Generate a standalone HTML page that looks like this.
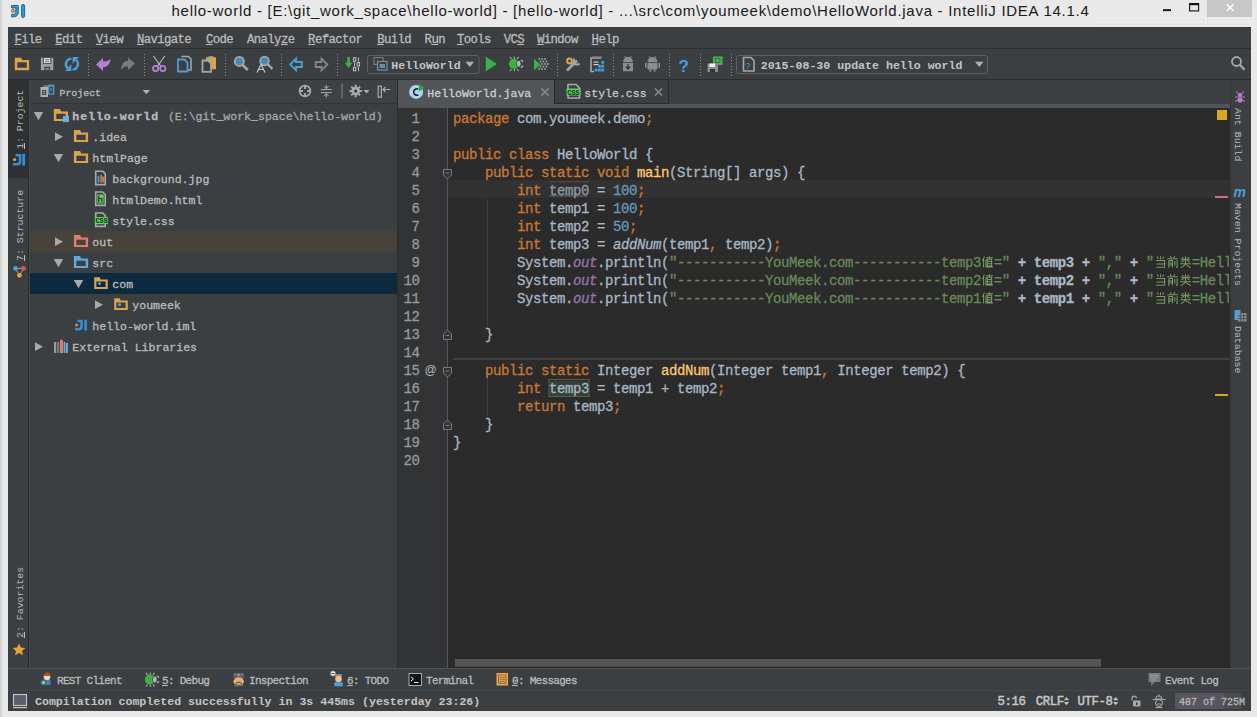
<!DOCTYPE html>
<html><head><meta charset="utf-8">
<style>
*{margin:0;padding:0;box-sizing:border-box}
html,body{width:1257px;height:717px;overflow:hidden;background:#e8e8e8;font-family:"Liberation Mono",monospace}
.a{position:absolute}
.t{position:absolute;white-space:pre;line-height:1;-webkit-text-stroke:0.3px currentColor}
#title{left:0;top:0;width:1257px;height:27px;background:#e9e9e9}
#frameL{left:0;top:0;width:2px;height:717px;background:#d6d6d6}
#ide{left:8px;top:27px;width:1243px;height:683px;background:#3c3f41}
#menu{left:8px;top:27px;width:1243px;height:22px;background:#3c3f41;border-bottom:1px solid #2d2f31}
#tool{left:8px;top:49px;width:1243px;height:31px;background:#3c3f41;border-bottom:1px solid #2b2b2b}
#lstrip{left:8px;top:80px;width:22px;height:588px;background:#3c3f41;border-right:1px solid #46494b}
#lstripb{left:28px;top:80px;width:1px;height:588px;background:#2b2b2b}
#lsel{left:8px;top:80px;width:20px;height:98px;background:#2e3032}
#proj{left:30px;top:80px;width:367px;height:588px;background:#3c3f41}
#projhdr{left:30px;top:80px;width:367px;height:24px;background:#3e4143;border-bottom:1px solid #323436}
#divider{left:397px;top:80px;width:1px;height:588px;background:#2b2b2b}
#tabs{left:398px;top:80px;width:832px;height:28px;background:#3c3f41}
#tab1{left:398px;top:80px;width:156px;height:28px;background:#515558}
#tab2{left:554px;top:80px;width:115px;height:24px;background:#3c3f41;border-left:1px solid #2b2b2b;border-right:1px solid #2b2b2b;border-bottom:1px solid #2b2b2b}
#tabstrip{left:398px;top:104px;width:832px;height:4px;background:#515558}
#editor{left:398px;top:108px;width:832px;height:560px;background:#2b2b2b}
#gutter{left:398px;top:108px;width:50px;height:560px;background:#313335;border-right:1px solid #555555}
#rstrip{left:1230px;top:80px;width:21px;height:588px;background:#3c3f41;border-left:1px solid #333537}
#bbar{left:8px;top:668px;width:1243px;height:22px;background:#3c3f41;border-top:1px solid #505355}
#sbar{left:8px;top:690px;width:1243px;height:20.5px;background:#3c3f41;border-top:1px solid #46494b}
.mn{font-size:12.3px;letter-spacing:-0.6px;color:#bbbbbb}
.u{text-decoration:underline;text-underline-offset:1px}
.tr{font-size:11.55px;color:#bbbbbb}
.cd{font-size:14px;letter-spacing:-0.4px;color:#a9b7c6;line-height:18px}
.k{color:#cc7832}.s{color:#6a8759}.n{color:#6897bb}.f{color:#ffc66d}.i{font-style:italic}.o{color:#9876aa;font-style:italic}
.b{font-weight:bold}
.ln{font-size:14px;letter-spacing:-0.4px;color:#999999;line-height:18px;text-align:right;width:40px}
.cj{display:inline-block;width:13px;height:12px;vertical-align:-1px;margin-right:-0.4px}
.vt{position:absolute;white-space:pre;line-height:1;transform-origin:0 0;transform:rotate(90deg);font-size:9.9px;color:#bbbbbb}
.vl{transform:rotate(-90deg)}
</style></head><body>
<div id="title" class="a"></div>
<div id="frameL" class="a"></div>
<svg class="a" style="left:0;top:0" width="1257" height="27" viewBox="0 0 1257 27"><defs><pattern id="tdots" x="0" y="1" width="4" height="4" patternUnits="userSpaceOnUse"><rect x="1" y="0" width="1" height="1" fill="#ffffff" opacity="0.8"/></pattern></defs>
<rect x="28" y="12" width="140" height="15" fill="url(#tdots)"/><rect x="1095" y="12" width="160" height="15" fill="url(#tdots)"/><rect x="168" y="20" width="927" height="7" fill="url(#tdots)" opacity="0.5"/></svg>
<div class="t" style="left:171.5px;top:3.2px;font-family:'Liberation Sans',sans-serif;font-size:15px;letter-spacing:0.725px;color:#1a1a1a;-webkit-text-stroke:0">hello-world - [E:\git_work_space\hello-world] - [hello-world] - ...\src\com\youmeek\demo\HelloWorld.java - IntelliJ IDEA 14.1.4</div>
<div class="a" style="left:1207px;top:0;width:45px;height:17px;background:#c7c7c7"></div>
<div id="ide" class="a"></div>
<div id="menu" class="a"></div>
<div id="tool" class="a"></div>
<div id="lstrip" class="a"></div>
<div id="lsel" class="a"></div>
<div id="lstripb" class="a"></div>
<div id="proj" class="a"></div>
<div id="projhdr" class="a"></div>
<div id="divider" class="a"></div>
<div id="tabs" class="a"></div>
<div id="tab1" class="a"></div>
<div id="tab2" class="a"></div>
<div id="tabstrip" class="a"></div>
<div id="editor" class="a"></div>
<div id="gutter" class="a"></div>
<div id="rstrip" class="a"></div>
<div id="bbar" class="a"></div>
<div id="sbar" class="a"></div>

<!-- menu -->
<div class="t mn" style="margin-top:-0.8px;left:14.4px;top:34.3px"><span class="u">F</span>ile</div>
<div class="t mn" style="margin-top:-0.8px;left:55.3px;top:34.3px"><span class="u">E</span>dit</div>
<div class="t mn" style="margin-top:-0.8px;left:95.8px;top:34.3px"><span class="u">V</span>iew</div>
<div class="t mn" style="margin-top:-0.8px;left:136.9px;top:34.3px"><span class="u">N</span>avigate</div>
<div class="t mn" style="margin-top:-0.8px;left:205.9px;top:34.3px"><span class="u">C</span>ode</div>
<div class="t mn" style="margin-top:-0.8px;left:247.0px;top:34.3px">Analy<span class="u">z</span>e</div>
<div class="t mn" style="margin-top:-0.8px;left:308.1px;top:34.3px"><span class="u">R</span>efactor</div>
<div class="t mn" style="margin-top:-0.8px;left:377.2px;top:34.3px"><span class="u">B</span>uild</div>
<div class="t mn" style="margin-top:-0.8px;left:424.6px;top:34.3px">R<span class="u">u</span>n</div>
<div class="t mn" style="margin-top:-0.8px;left:456.9px;top:34.3px"><span class="u">T</span>ools</div>
<div class="t mn" style="margin-top:-0.8px;left:503.7px;top:34.3px">VC<span class="u">S</span></div>
<div class="t mn" style="margin-top:-0.8px;left:537.0px;top:34.3px"><span class="u">W</span>indow</div>
<div class="t mn" style="margin-top:-0.8px;left:591.6px;top:34.3px"><span class="u">H</span>elp</div>

<!-- toolbar texts -->
<div class="t" style="left:391.3px;top:60px;font-size:11.55px;color:#c4c4c4;font-weight:bold;-webkit-text-stroke:0">HelloWorld</div>
<div class="t" style="left:760.7px;top:60px;font-size:11.6px;color:#c4c4c4;font-weight:bold;-webkit-text-stroke:0">2015-08-30 update hello world</div>

<!-- project header -->
<div class="t" style="left:59.5px;top:88.5px;font-size:9.9px;color:#bbbbbb">Project</div>

<!-- tree -->
<div class="t tr b" style="left:72.3px;top:111.2px;letter-spacing:0.96px">hello-world</div>
<div class="t tr" style="left:167.9px;top:111.2px;color:#a8a8a8">(E:\git_work_space\hello-world)</div>
<div class="t tr" style="left:92.3px;top:132.2px">.idea</div>
<div class="t tr" style="left:92.3px;top:153.2px">htmlPage</div>
<div class="t tr" style="left:112.3px;top:174.2px">background.jpg</div>
<div class="t tr" style="left:112.3px;top:195.2px">htmlDemo.html</div>
<div class="t tr" style="left:112.3px;top:216.2px">style.css</div>
<div class="a" style="left:30px;top:231px;width:367px;height:21px;background:#47433a"></div>
<div class="t tr" style="left:92.3px;top:237.2px">out</div>
<div class="t tr" style="left:92.3px;top:258.2px">src</div>
<div class="a" style="left:30px;top:273px;width:367px;height:21px;background:#0d293e"></div>
<div class="t tr" style="left:112.3px;top:279.2px">com</div>
<div class="t tr" style="left:132.3px;top:300.2px">youmeek</div>
<div class="t tr" style="left:92.3px;top:321.2px">hello-world.iml</div>
<div class="t tr" style="left:72.3px;top:342.2px">External Libraries</div>

<!-- tabs -->
<div class="t" style="left:427.3px;top:87.6px;font-size:11.55px;color:#cfcfcf">HelloWorld.java</div>
<div class="t" style="left:584.3px;top:87.6px;font-size:11.55px;color:#c4c4c4">style.css</div>

<!-- line numbers -->
<div class="t ln" style="left:379.5px;top:110px">1
2
3
4
5
6
7
8
9
10
11
12
13
14
15
16
17
18
19
20</div>

<!-- code -->
<div class="a" style="left:448px;top:180px;width:782px;height:18px;background:#323232"></div>
<div class="t cd" style="left:453px;top:110px;width:776px;overflow:hidden"><span class="k">package</span> com.youmeek.demo<span class="k">;</span>

<span class="k">public class</span> HelloWorld {
    <span class="k">public static void</span> <span class="f">main</span>(String[] args) {
        <span class="k">int</span> <span style="color:#8e99a5">temp0</span> = <span class="n">100</span><span class="k">;</span>
        <span class="k">int</span> temp1 = <span class="n">100</span><span class="k">;</span>
        <span class="k">int</span> temp2 = <span class="n">50</span><span class="k">;</span>
        <span class="k">int</span> temp3 = <span class="i">addNum</span>(temp1<span class="k">,</span> temp2)<span class="k">;</span>
        System.<span class="o">out</span>.println(<span class="s">"-----------YouMeek.com-----------temp3<svg class="cj" viewBox="0 0 13 13" fill="none" stroke="#7b9b68" stroke-width="1.1"><path d="M3.2,0.5 L1,5.5 M2.3,3.5 V12.5 M5,2 H12.5 M8.7,0.3 V3.3 M6.3,3.5 H11 V10.8 H6.3 Z M6.3,5.9 H11 M6.3,8.3 H11 M4.8,3.6 V12 H12.7"/></svg>="</span> <span class="b">+ temp3 +</span> <span class="s">","</span> <b>+</b> <span class="s">"<svg class="cj" viewBox="0 0 13 13" fill="none" stroke="#7b9b68" stroke-width="1.1"><path d="M3,0.6 L4.2,3 M6.5,0.3 V3.6 M10,0.6 L8.8,3 M1.8,5 H11 V12.2 H1.8 M2.3,8.6 H11"/></svg><svg class="cj" viewBox="0 0 13 13" fill="none" stroke="#7b9b68" stroke-width="1.1"><path d="M4,0.3 L5.2,2 M9,0.3 L7.8,2 M0.8,3 H12.2 M2.5,5 V12.6 M2.5,5 H6.5 V12.2 M2.5,7.6 H6.5 M2.5,9.8 H6.5 M9,5.5 V10.2 M11.5,4.5 V12.5 L10.5,12"/></svg><svg class="cj" viewBox="0 0 13 13" fill="none" stroke="#7b9b68" stroke-width="1.1"><path d="M6.5,0.3 V6.2 M1.3,3.4 H11.7 M3,1 L4.1,2.6 M10,1 L8.9,2.6 M5.6,4 L2,6.5 M7.4,4 L11,6.5 M0.8,8.3 H12.2 M6.5,6.3 Q6.3,10.8 1.3,12.6 M6.9,9.3 L12.2,12.6"/></svg>=Hell</span>
        System.<span class="o">out</span>.println(<span class="s">"-----------YouMeek.com-----------temp2<svg class="cj" viewBox="0 0 13 13" fill="none" stroke="#7b9b68" stroke-width="1.1"><path d="M3.2,0.5 L1,5.5 M2.3,3.5 V12.5 M5,2 H12.5 M8.7,0.3 V3.3 M6.3,3.5 H11 V10.8 H6.3 Z M6.3,5.9 H11 M6.3,8.3 H11 M4.8,3.6 V12 H12.7"/></svg>="</span> <span class="b">+ temp2 +</span> <span class="s">","</span> <b>+</b> <span class="s">"<svg class="cj" viewBox="0 0 13 13" fill="none" stroke="#7b9b68" stroke-width="1.1"><path d="M3,0.6 L4.2,3 M6.5,0.3 V3.6 M10,0.6 L8.8,3 M1.8,5 H11 V12.2 H1.8 M2.3,8.6 H11"/></svg><svg class="cj" viewBox="0 0 13 13" fill="none" stroke="#7b9b68" stroke-width="1.1"><path d="M4,0.3 L5.2,2 M9,0.3 L7.8,2 M0.8,3 H12.2 M2.5,5 V12.6 M2.5,5 H6.5 V12.2 M2.5,7.6 H6.5 M2.5,9.8 H6.5 M9,5.5 V10.2 M11.5,4.5 V12.5 L10.5,12"/></svg><svg class="cj" viewBox="0 0 13 13" fill="none" stroke="#7b9b68" stroke-width="1.1"><path d="M6.5,0.3 V6.2 M1.3,3.4 H11.7 M3,1 L4.1,2.6 M10,1 L8.9,2.6 M5.6,4 L2,6.5 M7.4,4 L11,6.5 M0.8,8.3 H12.2 M6.5,6.3 Q6.3,10.8 1.3,12.6 M6.9,9.3 L12.2,12.6"/></svg>=Hell</span>
        System.<span class="o">out</span>.println(<span class="s">"-----------YouMeek.com-----------temp1<svg class="cj" viewBox="0 0 13 13" fill="none" stroke="#7b9b68" stroke-width="1.1"><path d="M3.2,0.5 L1,5.5 M2.3,3.5 V12.5 M5,2 H12.5 M8.7,0.3 V3.3 M6.3,3.5 H11 V10.8 H6.3 Z M6.3,5.9 H11 M6.3,8.3 H11 M4.8,3.6 V12 H12.7"/></svg>="</span> <span class="b">+ temp1 +</span> <span class="s">","</span> <b>+</b> <span class="s">"<svg class="cj" viewBox="0 0 13 13" fill="none" stroke="#7b9b68" stroke-width="1.1"><path d="M3,0.6 L4.2,3 M6.5,0.3 V3.6 M10,0.6 L8.8,3 M1.8,5 H11 V12.2 H1.8 M2.3,8.6 H11"/></svg><svg class="cj" viewBox="0 0 13 13" fill="none" stroke="#7b9b68" stroke-width="1.1"><path d="M4,0.3 L5.2,2 M9,0.3 L7.8,2 M0.8,3 H12.2 M2.5,5 V12.6 M2.5,5 H6.5 V12.2 M2.5,7.6 H6.5 M2.5,9.8 H6.5 M9,5.5 V10.2 M11.5,4.5 V12.5 L10.5,12"/></svg><svg class="cj" viewBox="0 0 13 13" fill="none" stroke="#7b9b68" stroke-width="1.1"><path d="M6.5,0.3 V6.2 M1.3,3.4 H11.7 M3,1 L4.1,2.6 M10,1 L8.9,2.6 M5.6,4 L2,6.5 M7.4,4 L11,6.5 M0.8,8.3 H12.2 M6.5,6.3 Q6.3,10.8 1.3,12.6 M6.9,9.3 L12.2,12.6"/></svg>=Hell</span>

    }

    <span class="k">public static</span> Integer <span class="f">addNum</span>(Integer temp1<span class="k">,</span> Integer temp2) {
        <span class="k">int</span> <span style="background:#344134">temp3</span> = temp1 + temp2<span class="k">;</span>
        <span class="k">return</span> temp3<span class="k">;</span>
    }
}
</div>

<!-- bottom bar -->
<div class="t" style="left:57px;top:676px;font-size:11px;letter-spacing:-0.7px;color:#bbbbbb">REST Client</div>
<div class="t" style="left:162px;top:676px;font-size:11px;letter-spacing:-0.7px;color:#bbbbbb"><span class="u">5</span>: Debug</div>
<div class="t" style="left:249px;top:676px;font-size:11px;letter-spacing:-0.7px;color:#bbbbbb">Inspection</div>
<div class="t" style="left:347px;top:676px;font-size:11px;letter-spacing:-0.7px;color:#bbbbbb"><span class="u">6</span>: TODO</div>
<div class="t" style="left:426px;top:676px;font-size:11px;letter-spacing:-0.7px;color:#bbbbbb">Terminal</div>
<div class="t" style="left:512px;top:676px;font-size:11px;letter-spacing:-0.7px;color:#bbbbbb"><span class="u">0</span>: Messages</div>
<div class="t" style="left:1165px;top:676px;font-size:11px;letter-spacing:-0.7px;color:#bbbbbb">Event Log</div>

<!-- status bar -->
<div class="t" style="left:35px;top:696px;font-size:11.6px;color:#c4c4c4;font-weight:bold;-webkit-text-stroke:0">Compilation completed successfully in 3s 445ms (yesterday 23:26)</div>
<div class="t" style="left:997.5px;top:696.2px;font-size:12.4px;letter-spacing:-0.45px;color:#c8c8c8;-webkit-text-stroke:0.45px currentColor">5:16</div>
<div class="t" style="left:1035.8px;top:696.2px;font-size:12.4px;letter-spacing:-0.45px;color:#c8c8c8;-webkit-text-stroke:0.45px currentColor">CRLF</div>
<div class="t" style="left:1077.6px;top:696.2px;font-size:12.4px;letter-spacing:-0.45px;color:#c8c8c8;-webkit-text-stroke:0.45px currentColor">UTF-8</div>
<div class="a" style="left:1175px;top:693px;width:66px;height:16px;background:#4a4c4e"></div><div class="a" style="left:1175px;top:693px;width:49px;height:16px;background:#58555e"></div>
<div class="t" style="left:1178.9px;top:697.8px;font-size:10px;color:#b8b8b8">487 of 725M</div>

<!-- vertical tool strip labels -->
<div class="vt vl" style="left:15.6px;top:149px"><span class="u">1</span>: Project</div>
<div class="vt vl" style="left:15.6px;top:261.3px"><span class="u">7</span>: Structure</div>
<div class="vt vl" style="left:15.6px;top:637.6px"><span class="u">2</span>: Favorites</div>
<div class="vt" style="left:1241.5px;top:107.8px">Ant Build</div>
<div class="vt" style="left:1241.5px;top:203px">Maven Projects</div>
<div class="vt" style="left:1241.5px;top:326px">Database</div>

<!--ICONS-->
<svg class="a" style="left:0;top:0" width="1257" height="717" viewBox="0 0 1257 717">
<!-- title bar icons -->
<g>
<path d="M11.5,5.5 H18.3 V12.5 A4.3,4.3 0 0 1 14,16.8 H11.5 V14.3 H13.8 A2,2 0 0 0 15.8,12.3 V8 H11.5 Z" fill="#2a9ad8" stroke="#1a5f9e" stroke-width="0.9"/>
<rect x="21.6" y="4.5" width="3" height="13" rx="1.4" fill="#2a9ad8" stroke="#1a5f9e" stroke-width="0.9"/>
<circle cx="13" cy="10.9" r="1.7" fill="#f08a14" stroke="#8a5010" stroke-width="0.5"/>
<rect x="1163" y="9.2" width="8" height="1.9" fill="#111"/>
<rect x="1189.6" y="3.6" width="9" height="7.3" fill="none" stroke="#111" stroke-width="1.1"/>
<rect x="1189.6" y="3.6" width="9" height="1.6" fill="#111"/>
<path d="M1226.8,4.3 L1233.6,11 M1233.6,4.3 L1226.8,11" stroke="#ffffff" stroke-width="1.4"/>
</g>
<!-- toolbar -->
<g>
<path fill-rule="evenodd" fill="#dda24c" d="M14.8,57.7 H21 L22.3,60 H29.1 V70.2 H14.8 Z M17.3,62.3 V67.8 H26.8 V62.3 Z"/>
<rect x="40.9" y="57.7" width="12.4" height="12.5" fill="#a0a0a0"/>
<rect x="43.6" y="57.7" width="7.2" height="5.8" fill="#f2f2f2" stroke="#333" stroke-width="0.8"/>
<rect x="45" y="59.3" width="4.4" height="0.9" fill="#555"/><rect x="45" y="61.3" width="4.4" height="0.9" fill="#555"/>
<rect x="44.4" y="66.8" width="5.7" height="3.4" fill="#2b2b2b"/><rect x="45.3" y="67.8" width="4" height="2" fill="#4a9fd8"/>
<path d="M71.3,58.6 A5.6,5.6 0 0 0 67.6,68.2" fill="none" stroke="#4a9fd8" stroke-width="2.4"/>
<path d="M64.9,71 L71.3,71 L71.3,64.3 Z" fill="#4a9fd8"/>
<path d="M72.6,69.6 A5.6,5.6 0 0 0 76.3,60" fill="none" stroke="#4a9fd8" stroke-width="2.4"/>
<path d="M79,57 L72.6,57 L72.6,63.7 Z" fill="#4a9fd8"/>
<g stroke="#8c8c8c" stroke-width="1" stroke-dasharray="1 2">
<line x1="88.5" y1="54" x2="88.5" y2="77"/><line x1="144.5" y1="54" x2="144.5" y2="77"/><line x1="225.5" y1="54" x2="225.5" y2="77"/>
<line x1="281.5" y1="54" x2="281.5" y2="77"/><line x1="337.5" y1="54" x2="337.5" y2="77"/><line x1="557.5" y1="54" x2="557.5" y2="77"/>
<line x1="613.5" y1="54" x2="613.5" y2="77"/><line x1="669.5" y1="54" x2="669.5" y2="77"/><line x1="700.5" y1="54" x2="700.5" y2="77"/>
<line x1="731.5" y1="54" x2="731.5" y2="77"/>
</g>
<path d="M96,64.5 L103,58 L103,61.6 C106.5,61.6 109,60.8 110.6,58.6 C110.3,64.5 107,67.3 103,67.3 L103,71 Z" fill="#b57fd6"/>
<path d="M135,63.5 L128,57.5 L128,61 C124,61 121.5,63.5 121,69.8 C123,66.8 125.5,66.2 128,66.2 L128,70 Z" fill="#7b7b7b"/>
<path d="M153.5,56 L161,66.5 M164.8,56 L157.3,66.5" stroke="#b8b8b8" stroke-width="1.2"/>
<circle cx="155.6" cy="68.5" r="2.6" fill="none" stroke="#b57fd6" stroke-width="1.8"/>
<circle cx="162.8" cy="68.5" r="2.6" fill="none" stroke="#b57fd6" stroke-width="1.8"/>
<path d="M181.5,56.5 H188.5 L191,59 V70 H184" fill="none" stroke="#a6a6a6" stroke-width="1.6"/>
<path d="M178,59.5 H184.5 L187.5,62.5 V71.5 H178 Z" fill="#3c3f41" stroke="#4d9ed6" stroke-width="1.8"/>
<rect x="206" y="57.3" width="10" height="12" fill="#dda24c"/><rect x="208.5" y="56.2" width="5" height="1.6" fill="#a6a6a6"/>
<path d="M202.5,60.5 H208 L211,63.5 V71.8 H202.5 Z" fill="#3c3f41" stroke="#a6a6a6" stroke-width="1.8"/>
<circle cx="239.3" cy="61.4" r="4.6" fill="#3f8bb9" stroke="#a6a6a6" stroke-width="1.8"/>
<path d="M242.5,64.8 L247.8,70" stroke="#a6a6a6" stroke-width="2.6"/>
<circle cx="264.5" cy="61" r="4.3" fill="#3f8bb9" stroke="#a6a6a6" stroke-width="1.7"/>
<path d="M267.6,64.2 L272.5,69" stroke="#a6a6a6" stroke-width="2.4"/>
<path d="M257,72.5 L261,64.5 L265,72.5 M258.6,69.5 H263.4" fill="none" stroke="#c8c8c8" stroke-width="1.2"/>
<path d="M290.2,64.5 L296,58.7 V62 H301.8 V67 H296 V70.3 Z" fill="none" stroke="#4d9ed6" stroke-width="1.9" stroke-linejoin="miter"/>
<path d="M327.3,64.5 L321.5,58.7 V62 H315.7 V67 H321.5 V70.3 Z" fill="none" stroke="#858585" stroke-width="1.9"/>
<rect x="347.3" y="56.8" width="2.6" height="6.5" fill="#3cb04a"/><path d="M344.8,62.5 H352.4 L348.6,68.3 Z" fill="#3cb04a"/>
<g fill="none" stroke="#d0d0d0" stroke-width="0.9">
<rect x="353.4" y="57.8" width="2.4" height="3.4"/><path d="M358.4,57.5 V61.6"/>
<path d="M354.6,62.3 V66.4"/><rect x="357.2" y="62.6" width="2.4" height="3.4"/>
<rect x="353.4" y="67.4" width="2.4" height="3.4"/><path d="M358.4,67.1 V71.2"/>
</g>
<rect x="367.5" y="55.5" width="111.5" height="18" rx="2" fill="none" stroke="#5d6164" stroke-width="1"/>
<rect x="374" y="57.5" width="9" height="7" fill="none" stroke="#7a7d80" stroke-width="1.1"/>
<rect x="377.5" y="61.5" width="9.5" height="8.5" fill="#3c3f41" stroke="#6e8fa8" stroke-width="1.2"/>
<rect x="379.5" y="64" width="5.5" height="4" fill="#6a8ca0"/>
<path d="M465.5,61.8 H474 L469.75,67 Z" fill="#b0b0b0"/>
<path d="M485.8,56.8 L497,64 L485.8,71.2 Z" fill="#3cb04a"/>
<path d="M510,57 L511.6,59 M514.3,56.6 V58.8 M518.5,57 L517,59 M510,71 L511.6,69 M514.3,71.2 V69 M518.5,71 L517,69" stroke="#b0b0b0" stroke-width="1.1"/>
<path d="M517.6,60.2 A5.1,5.1 0 1 0 517.6,67.4 A2.6,4.2 0 0 1 517.6,60.2 Z" fill="#3cb04a"/>
<ellipse cx="518.8" cy="63.8" rx="1.8" ry="3" fill="#b8b8b8"/>
<path d="M520.6,60.3 C522.6,60.3 522.8,61.6 522.8,62.2 M520.6,67.3 C522.6,67.3 522.8,66 522.8,65.4" fill="none" stroke="#b8b8b8" stroke-width="1.1"/>
<path d="M534,58.8 L540.5,64.5 L534,70.2 Z" fill="#3cb04a"/>
<g fill="#a6a6a6"><circle cx="539" cy="59" r="0.9"/><circle cx="542" cy="59" r="0.9"/><circle cx="545" cy="59" r="0.9"/><circle cx="540.5" cy="61.5" r="0.9"/><circle cx="543.5" cy="61.5" r="0.9"/><circle cx="546.5" cy="61.5" r="0.9"/><circle cx="542" cy="64" r="0.9"/><circle cx="545" cy="64" r="0.9"/><circle cx="548" cy="64" r="0.9"/><circle cx="540.5" cy="66.5" r="0.9"/><circle cx="543.5" cy="66.5" r="0.9"/><circle cx="546.5" cy="66.5" r="0.9"/><circle cx="539" cy="69" r="0.9"/><circle cx="542" cy="69" r="0.9"/><circle cx="545" cy="69" r="0.9"/></g>
<circle cx="569.5" cy="61" r="2.4" fill="none" stroke="#dda24c" stroke-width="2"/>
<path d="M567,70.5 L577,60.5" stroke="#a6a6a6" stroke-width="2.6"/>
<path d="M574.5,58.8 A3.2,3.2 0 1 0 579.5,63.5" fill="none" stroke="#a6a6a6" stroke-width="2"/>
<path d="M601,58 H591 V71.5 H594" fill="none" stroke="#a6a6a6" stroke-width="1.6"/><rect x="592" y="56.5" width="10" height="1.5" fill="#8a8a9a"/>
<rect x="593.5" y="61.5" width="5" height="1.2" fill="#d0d0d0"/><rect x="593.5" y="64" width="5" height="1.2" fill="#d0d0d0"/>
<g fill="#3d9ee6"><rect x="601.3" y="61" width="2.8" height="2.8"/><rect x="598" y="64.8" width="2.8" height="2.8"/><rect x="601.3" y="64.8" width="2.8" height="2.8"/><rect x="594.7" y="68.6" width="2.8" height="2.8"/><rect x="598" y="68.6" width="2.8" height="2.8"/><rect x="601.3" y="68.6" width="2.8" height="2.8"/></g>
<path d="M623,62 A5,5 0 0 1 633,62 Z" fill="#8c8c8c"/><rect x="623" y="62.8" width="10" height="8.5" fill="#8c8c8c"/>
<path d="M628,64 V68.5 M625.8,66.5 L628,69 L630.2,66.5" stroke="#333" stroke-width="1.2" fill="none"/>
<path d="M624.5,56 L626,58.5 M631.5,56 L630,58.5" stroke="#8c8c8c" stroke-width="0.9"/>
<path d="M647.5,62 A5,5 0 0 1 657.5,62 Z" fill="#8c8c8c"/><rect x="647.5" y="62.8" width="10" height="6.5" fill="#8c8c8c"/>
<rect x="645" y="62.8" width="1.6" height="5" fill="#8c8c8c"/><rect x="658.4" y="62.8" width="1.6" height="5" fill="#8c8c8c"/>
<rect x="649.5" y="69" width="1.8" height="2.6" fill="#8c8c8c"/><rect x="653.7" y="69" width="1.8" height="2.6" fill="#8c8c8c"/>
<path d="M649,56 L650.5,58.5 M656,56 L654.5,58.5" stroke="#8c8c8c" stroke-width="0.9"/>
<text x="678.5" y="71.5" font-family="Liberation Sans" font-weight="bold" font-size="17" fill="#3d9ee6">?</text>
<rect x="713" y="56.5" width="9.5" height="8.5" fill="#4db34a"/><rect x="715.5" y="58.5" width="4.5" height="4" fill="none" stroke="#2d6a2d" stroke-width="0.8"/>
<rect x="707.5" y="63.5" width="10.5" height="8.5" fill="#8c8c8c"/><rect x="709.5" y="63.5" width="5.5" height="3.5" fill="#eeeeee"/><rect x="710" y="69" width="5" height="3" fill="#333"/>
<rect x="736.5" y="55.5" width="251" height="18" rx="2" fill="none" stroke="#5d6164" stroke-width="1"/>
<path d="M743.5,57.5 H751 L754,60.5 V71 H743.5 Z" fill="none" stroke="#a6a6a6" stroke-width="1.6"/>
<text x="745.2" y="68.5" font-family="Liberation Sans" font-size="9" fill="#3d9ee6">?</text>
<path d="M975,61.8 H983.5 L979.25,67 Z" fill="#b0b0b0"/>
<circle cx="1236.5" cy="61.5" r="4.5" fill="none" stroke="#a6a6a6" stroke-width="1.8"/>
<path d="M1239.8,64.8 L1244.5,69.8" stroke="#a6a6a6" stroke-width="2.4"/>
</g>
</svg>

<!--ICONS2-->
<svg class="a" style="left:0;top:0" width="1257" height="717" viewBox="0 0 1257 717">
<defs>
<path id="fold" fill-rule="evenodd" d="M0,0 H6.2 L7.2,2.6 H14.2 V12.2 H0 Z M2.5,4.8 V10 H11.8 V4.8 Z"/>
<path id="foldS" fill-rule="evenodd" d="M0,0 H5.5 L6.5,2.2 H13.6 V11.8 H0 Z M2.2,4.3 V9.7 H11.4 V4.3 Z"/>
<path id="tdown" d="M0,0 H9.4 L4.7,8.2 Z"/>
<path id="tright" d="M0,0 L8,4.4 L0,8.8 Z"/>
<path id="doc" fill="none" stroke="#a9a9a9" stroke-width="1.6" d="M0.8,0.8 H7.8 L10.3,3.3 V14.2 H0.8 Z"/>
</defs>
<!-- project header -->
<rect x="40.5" y="87" width="7.5" height="10" fill="#b0b0b0"/><rect x="42.2" y="90" width="4" height="5" fill="#333"/><rect x="43" y="91" width="2.4" height="1.2" fill="#b0b0b0"/><rect x="43" y="93.2" width="2.4" height="1" fill="#b0b0b0"/>
<rect x="48.7" y="85.3" width="5" height="8.7" fill="none" stroke="#4d9ed6" stroke-width="1.3"/><rect x="43.5" y="85.3" width="10" height="1.4" fill="#4d9ed6"/><rect x="50" y="88" width="2.5" height="3.5" fill="#3a8060"/>
<path d="M142.7,90 H150 L146.35,94.2 Z" fill="#b0b0b0"/>
<circle cx="305" cy="91" r="5.4" fill="none" stroke="#a9a9a9" stroke-width="1.7"/>
<path d="M305,86 V89 M305,93 V96 M300,91 H303 M307,91 H310" stroke="#a9a9a9" stroke-width="1.9"/>
<path d="M320.8,89.6 H331.8 M320.8,92.6 H331.8 M326.3,84.8 V88.5 M326.3,93.7 V97.5" stroke="#a9a9a9" stroke-width="1"/>
<path d="M324,86.2 L326.3,88.6 L328.6,86.2 M324,96.1 L326.3,93.6 L328.6,96.1" fill="none" stroke="#a9a9a9" stroke-width="1"/>
<rect x="341.5" y="83.5" width="1" height="15" fill="#8a8a8a"/>
<circle cx="355.7" cy="91" r="4.3" fill="#a9a9a9"/>
<path d="M355.7,84.8 V97.2 M349.5,91 H361.9 M351.3,86.6 L360.1,95.4 M360.1,86.6 L351.3,95.4" stroke="#a9a9a9" stroke-width="2"/>
<circle cx="355.7" cy="91" r="1.5" fill="#2e2e2e"/>
<path d="M363.5,90 H369.5 L366.5,93.5 Z" fill="#a9a9a9"/>
<rect x="378.2" y="86.2" width="3.2" height="11" fill="none" stroke="#a9a9a9" stroke-width="1.2"/>
<path d="M383,89.5 H390.5 M385.5,87 L383,89.5 L385.5,92" fill="none" stroke="#a9a9a9" stroke-width="1.2"/>
<!-- tree triangles -->
<g fill="#a9a9a9">
<use href="#tdown" x="33.8" y="112"/>
<use href="#tright" x="55" y="132.3"/>
<use href="#tdown" x="53.8" y="154"/>
<use href="#tright" x="55" y="237.3"/>
<use href="#tdown" x="53.8" y="259"/>
<use href="#tdown" x="73.8" y="280"/>
<use href="#tright" x="95" y="300.3"/>
<use href="#tright" x="35" y="342.3"/>
</g>
<!-- tree icons -->
<use href="#fold" x="53.8" y="108.9" fill="#dba24f"/>
<rect x="63" y="115.9" width="6" height="6.2" fill="#6aaed6"/>
<use href="#fold" x="73.9" y="129.9" fill="#dba24f"/>
<use href="#fold" x="73.9" y="150.9" fill="#dba24f"/>
<use href="#doc" x="94.9" y="170.4"/>
<rect x="97.6" y="176" width="1.8" height="6.5" fill="#3d9ee6"/><rect x="100.2" y="175" width="1.8" height="7.5" fill="#e8643c"/><rect x="102.4" y="176.5" width="1.3" height="6" fill="#e8a23c"/>
<use href="#doc" x="94.9" y="191.2"/>
<rect x="97.3" y="194.5" width="6.3" height="9" fill="#5fd35f"/><path d="M98.8,195.5 V202.5 M98.8,198.5 H101.8 V202.5" fill="none" stroke="#1c3a1c" stroke-width="1.2"/>
<use href="#doc" x="94.9" y="212.2"/>
<rect x="94.9" y="217" width="13" height="7.2" fill="#5fd35f"/>
<text x="95.6" y="223.2" font-family="Liberation Mono" font-weight="bold" font-size="7" fill="#1a2e1a" letter-spacing="-0.3">CSS</text>
<use href="#fold" x="73.9" y="234.9" fill="#e07a72"/>
<use href="#fold" x="73.9" y="255.9" fill="#62a8d8"/>
<use href="#foldS" x="94.2" y="277.2" fill="#dba24f"/>
<circle cx="99.6" cy="283.6" r="1.4" fill="#6aaed6"/>
<use href="#foldS" x="114.2" y="298.2" fill="#dba24f"/>
<circle cx="119.6" cy="304.6" r="1.4" fill="#6aaed6"/>
<path d="M77.5,319.8 H82.8 V326.5 A4,4 0 0 1 78.8,330.5 H75 V328 H78.3 A2,2 0 0 0 80.3,326 V322.3 H77.5 Z" fill="#2f8fd6"/>
<rect x="84.3" y="319.8" width="2.6" height="10.7" fill="#2f8fd6"/>
<circle cx="76.6" cy="325" r="1.5" fill="#f08a24"/>
<g>
<rect x="54" y="342" width="2.2" height="11" fill="#9a9a9a"/><rect x="57" y="342" width="2.2" height="11" fill="#7a7a7a"/>
<rect x="60" y="339.8" width="3" height="13.2" fill="#e07a72"/><rect x="63.6" y="342" width="1.8" height="11" fill="#6aaed6"/><rect x="66" y="343" width="1.9" height="10" fill="#6aaed6"/>
</g>
</svg>

<!--ICONS3-->
<svg class="a" style="left:0;top:0" width="1257" height="717" viewBox="0 0 1257 717">
<!-- left strip icons -->
<path d="M15.5,154 H21.3 V161.5 A4,4 0 0 1 17.3,165.5 H13 V163 H16.8 A2,2 0 0 0 18.8,161 V156.5 H15.5 Z" fill="#2f8fd6"/>
<rect x="22.3" y="154" width="2.8" height="11.5" fill="#2f8fd6"/>
<circle cx="14.6" cy="159.6" r="1.7" fill="#f08a24"/>
<path d="M15.5,268.5 H23.5 L19.5,275.5 Z" fill="none" stroke="#a9a9a9" stroke-width="0.9"/>
<circle cx="15.5" cy="268.3" r="2.4" fill="#4d9ed6"/><circle cx="23.5" cy="268.3" r="2.4" fill="#e05555"/><circle cx="19.5" cy="275.3" r="2.4" fill="#e8a23c"/>
<path d="M19,643.5 L20.9,647.6 L25.3,648 L22,651 L23,655.3 L19,653 L15,655.3 L16,651 L12.7,648 L17.1,647.6 Z" fill="#e8a23c"/>
<!-- right strip icons -->
<g stroke="#c090e0" stroke-width="0.8" fill="none"><path d="M1236,91 L1238.5,94 M1244,91 L1241.5,94 M1235,97 H1245 M1235,101.5 L1238,100 M1245,101.5 L1242,100"/></g>
<ellipse cx="1240" cy="95" rx="2.3" ry="2" fill="#b57fd6"/><ellipse cx="1240" cy="100" rx="2.6" ry="2.6" fill="#b57fd6"/>
<text x="1233.5" y="197" font-family="Liberation Sans" font-style="italic" font-weight="bold" font-size="14" fill="#4d9ed6">m</text>
<rect x="1234.5" y="310" width="6" height="10" fill="#4d9ed6"/>
<rect x="1238" y="313" width="8.5" height="8.5" fill="#8c8c8c"/><path d="M1238,315.8 H1246.5 M1238,318.6 H1246.5 M1240.8,313 V321.5 M1243.6,313 V321.5" stroke="#3c3f41" stroke-width="0.7"/>
<!-- tab icons -->
<circle cx="416.1" cy="91.9" r="7" fill="#a8d6ef"/>
<path d="M418.4,89.2 A3.2,3.2 0 1 0 418.4,94.8" fill="none" stroke="#1c1c1c" stroke-width="1.5"/>
<path d="M419,84 L424.5,87.8 L419,91.5 Z" fill="#2ea33a"/>
<path d="M541.5,88.5 L548.5,95.5 M548.5,88.5 L541.5,95.5" stroke="#8a8a8a" stroke-width="1.6"/>
<path d="M568,84.5 H576 L579.5,88 V98 H568 Z" fill="none" stroke="#a9a9a9" stroke-width="1.6"/>
<rect x="566.5" y="88.5" width="14" height="7" fill="#5fd35f"/>
<text x="567.3" y="94.5" font-family="Liberation Mono" font-weight="bold" font-size="7.2" fill="#1a2e1a" letter-spacing="-0.3">CSS</text>
<path d="M655,88.5 L662,95.5 M662,88.5 L655,95.5" stroke="#8a8a8a" stroke-width="1.6"/>
<!-- gutter -->
<g fill="#313335" stroke="#7a7a7a" stroke-width="1">
<path d="M443.5,169.5 H451.5 V175 L447.5,179 L443.5,175 Z"/>
<path d="M443.5,339.5 H451.5 V334 L447.5,330 L443.5,334 Z"/>
<path d="M443.5,367.5 H451.5 V373 L447.5,377 L443.5,373 Z"/>
<path d="M443.5,429.5 H451.5 V424 L447.5,420 L443.5,424 Z"/>
</g>
<path d="M445.5,173 H449.5 M445.5,335.5 H449.5 M445.5,371 H449.5 M445.5,425.5 H449.5" stroke="#7a7a7a" stroke-width="1"/>
<text x="424.5" y="373.5" font-family="Liberation Sans" font-size="12" fill="#b8b8b8">@</text>
<!-- editor decorations -->
<path d="M487.5,199 V326 M487.5,379 V416" stroke="#3d3d3d" stroke-width="1"/>
<rect x="453" y="358.5" width="777" height="1" fill="#575757"/>
<path d="M549.5,196.5 l2,-1.5 l2,1.5 l2,-1.5 l2,1.5 l2,-1.5 l2,1.5 l2,-1.5 l2,1.5 l2,-1.5 l2,1.5 l2,-1.5 l2,1.5 l2,-1.5 l2,1.5 l2,-1.5 l2,1.5 l2,-1.5 l2,1.5 l2,-1.5" fill="none" stroke="#8c8c8c" stroke-width="0.8"/>
<rect x="549" y="181" width="40" height="1.5" fill="#5a3a32"/>
<rect x="549" y="379.5" width="40" height="17" fill="none" stroke="#596049" stroke-width="1"/>
<rect x="1217" y="110" width="10" height="10" fill="#d7a71e"/>
<rect x="1215" y="196" width="13" height="2" fill="#c7727a"/>
<rect x="1215" y="394" width="13" height="2" fill="#d7a71e"/>
<rect x="455" y="659" width="646" height="7.7" fill="#555555"/>
<!-- bottom bar icons -->
<circle cx="47" cy="677" r="3.3" fill="#f2d8b0"/><path d="M43.5,676 Q44,672 47.5,672.5 Q51,673 50.5,676 Z" fill="#9a5a2a"/>
<rect x="44.5" y="680" width="6" height="5" fill="#3d7ec0"/>
<circle cx="43.5" cy="682.5" r="3" fill="#2a6ab0"/><circle cx="43.5" cy="682.5" r="1.6" fill="#f0c020"/>
<path d="M146,672.8 L147.6,674.8 M150.3,672.4 V674.6 M154.5,672.8 L153,674.8 M146,686.5 L147.6,684.5 M150.3,686.8 V684.6 M154.5,686.5 L153,684.5" stroke="#b0b0b0" stroke-width="1.1"/>
<path d="M153.6,675.9 A5.1,5.1 0 1 0 153.6,683.1 A2.6,4.2 0 0 1 153.6,675.9 Z" fill="#3cb04a"/>
<ellipse cx="154.8" cy="679.5" rx="1.8" ry="3" fill="#b8b8b8"/>
<path d="M156.6,676 C158.4,676 158.6,677.3 158.6,677.9 M156.6,683 C158.4,683 158.6,681.7 158.6,681.1" fill="none" stroke="#b8b8b8" stroke-width="1.1"/>
<rect x="233.5" y="673" width="10.5" height="3.5" rx="1" fill="#6a6a6a"/><circle cx="238.7" cy="675" r="1" fill="#e8a23c"/>
<rect x="233" y="676.5" width="11.5" height="1.2" fill="#4a6a9a"/>
<ellipse cx="238.7" cy="681.5" rx="5.2" ry="4.3" fill="#e8b070"/><path d="M235.5,683.5 Q238.7,680.5 242,683.5" fill="none" stroke="#4a3a2a" stroke-width="1"/>
<rect x="234.5" y="684.5" width="8.5" height="1.8" fill="#6a6a6a"/>
<circle cx="333" cy="673.5" r="2.8" fill="#eeeeee" stroke="#555" stroke-width="0.6"/><rect x="331.3" y="673.1" width="3.4" height="0.9" fill="#333"/>
<rect x="335" y="674" width="7" height="3" rx="1" fill="#8c8c8c"/>
<circle cx="338.5" cy="679" r="3.3" fill="#f2c090"/>
<rect x="334.3" y="682.3" width="8.5" height="4" fill="#4d9ed6"/>
<rect x="409" y="673.5" width="12.5" height="12" fill="#111" stroke="#aaa" stroke-width="1"/>
<path d="M411,677 L413.5,679 L411,681 M414,682.5 H418.5" fill="none" stroke="#eee" stroke-width="1"/>
<rect x="496.5" y="673" width="11.5" height="12.5" fill="#e8a85a"/><rect x="498.5" y="675" width="7.5" height="8.5" fill="none" stroke="#8a5a20" stroke-width="0.8"/>
<path d="M499.5,677.5 H505 M499.5,679.7 H505 M499.5,681.7 H505" stroke="#8a5a20" stroke-width="0.8"/>
<rect x="1148.5" y="673" width="12" height="9" fill="#7a7a7a"/><path d="M1151,682 V686 L1155,682 Z" fill="#7a7a7a"/>
<path d="M1150.5,675.5 H1158.5 M1150.5,677.8 H1158.5 M1150.5,680 H1156" stroke="#aaaaaa" stroke-width="0.8"/>
<!-- status bar icons -->
<rect x="13.5" y="694.5" width="13" height="11" fill="#5a5f6a" stroke="#c8c8c8" stroke-width="1.1"/>
<rect x="13" y="707" width="14" height="1.2" fill="#c8c8c8"/>
<rect x="1034.5" y="696" width="0.1" height="0.1" fill="none"/>
<path d="M1066.5,697 L1063.8,700.3 H1069.2 Z M1066.5,705.2 L1063.8,701.9 H1069.2 Z" fill="#c0c0c0"/>
<path d="M1115.7,697 L1113,700.3 H1118.4 Z M1115.7,705.2 L1113,701.9 H1118.4 Z" fill="#c0c0c0"/>
<rect x="1133" y="700.5" width="7.5" height="6" rx="1" fill="#aaaaaa"/><path d="M1132,700.5 V698.3 A2.2,2.2 0 0 1 1136.4,698.3" fill="none" stroke="#aaaaaa" stroke-width="1.2"/>
<rect x="1136" y="702.5" width="1.5" height="2.5" fill="#333"/>
<path d="M1155.5,699 A3,3 0 0 1 1162,699 Z" fill="none" stroke="#aaaaaa" stroke-width="1"/>
<path d="M1152.5,699.5 H1165.5" stroke="#8aa0b0" stroke-width="1.2"/>
<circle cx="1159" cy="703" r="3.5" fill="none" stroke="#aaaaaa" stroke-width="1"/>
<path d="M1156.5,704.5 Q1159,703 1161.5,704.5 M1155.5,707.5 H1162.5 M1159,694.5 V697" fill="none" stroke="#aaaaaa" stroke-width="1"/>
</svg>

</body></html>
